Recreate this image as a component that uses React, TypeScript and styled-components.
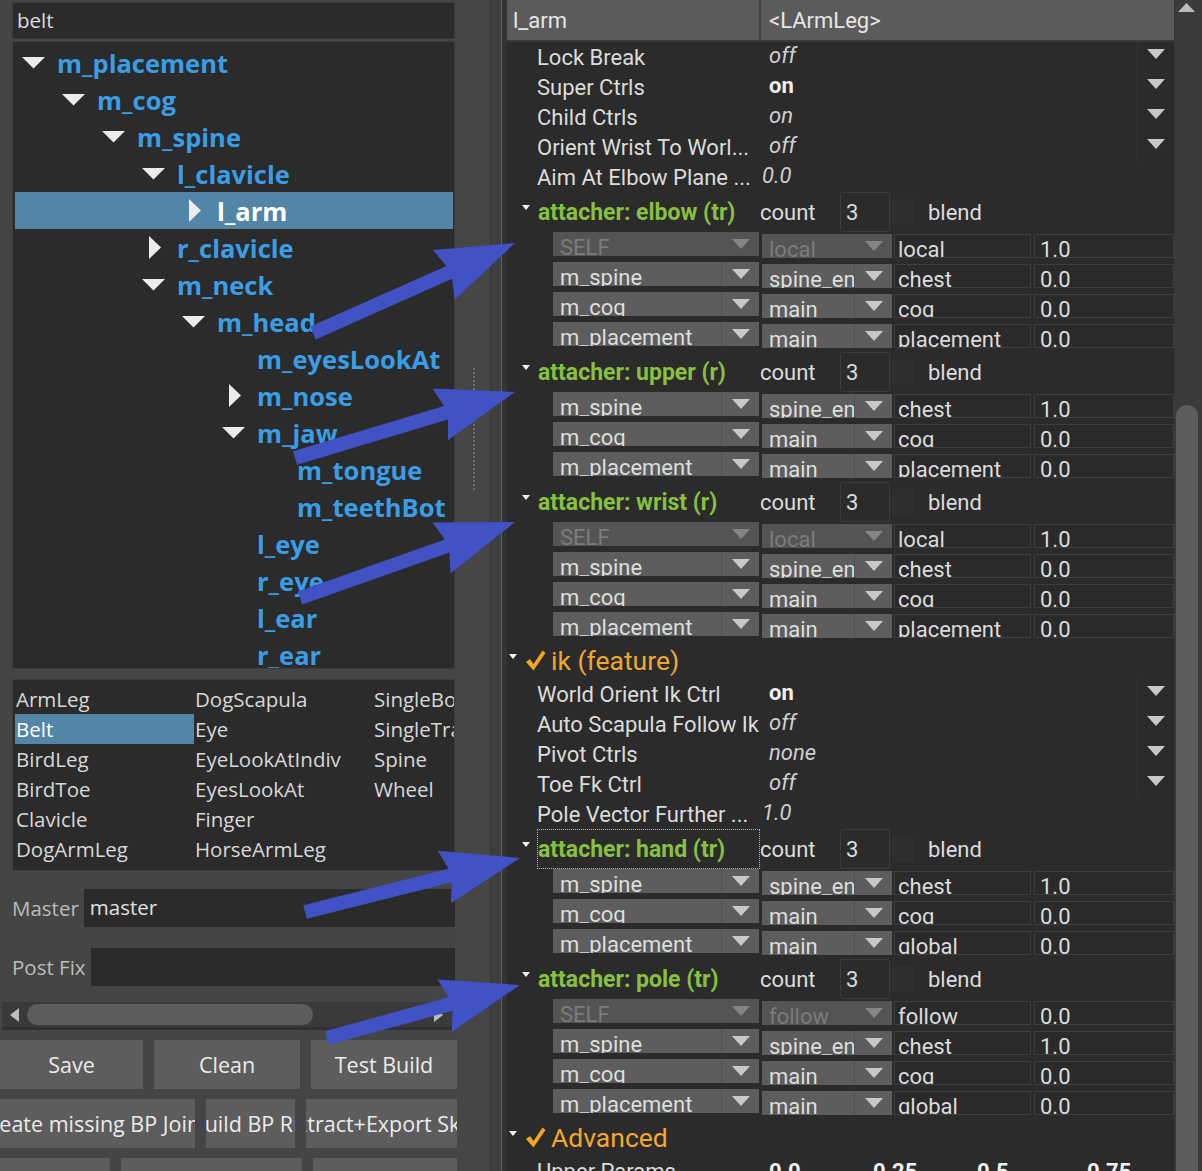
import React from "react";
import styled, { createGlobalStyle } from "styled-components";

const GlobalStyle = createGlobalStyle`
  html, body { margin: 0; padding: 0; background: #444444; }
  body { font-family: "Open Sans", "Noto Sans", sans-serif; color: #dcdcdc; }
  * { box-sizing: border-box; }
`;

const Screen = styled.div`
  position: relative;
  display: flex;
  width: 1202px;
  height: 1171px;
  overflow: hidden;
  background: #454545;
`;

/* ---------- left side ---------- */

const LeftPanel = styled.div`
  width: 457px;
  flex: none;
  display: flex;
  flex-direction: column;
`;

const SearchBox = styled.div`
  margin: 2px 2px 0 12px;
  height: 38px;
  background: #2b2b2b;
  border: 1px solid #3a3a3a;
  padding-left: 4px;
  font-size: 20.5px;
  line-height: 35px;
  color: #dcdcdc;
`;

const TreeBox = styled.div`
  margin: 2px 2px 0 12px;
  height: 628px;
  flex: none;
  background: #2b2b2b;
  border: 1px solid #3c3c3c;
  padding: 2px 1px 0 2px;
  overflow: hidden;
`;

const TreeRow = styled.div<{ $level: number; $selected?: boolean }>`
  display: flex;
  align-items: center;
  height: 37px;
  padding-left: ${(p) => 7 + p.$level * 40}px;
  background: ${(p) => (p.$selected ? "#5285a6" : "transparent")};
  color: ${(p) => (p.$selected ? "#ffffff" : "#3a9ee6")};
  font-weight: 700;
  font-size: 25.5px;
  white-space: nowrap;
`;

const Twisty = styled.span`
  width: 35px;
  flex: none;
  display: flex;
  align-items: center;
`;

const TypeList = styled.div`
  margin: 10px 2px 0 12px;
  height: 192px;
  flex: none;
  background: #2b2b2b;
  border: 1px solid #3c3c3c;
  padding: 4px 0 0 2px;
  overflow: hidden;
  display: grid;
  grid-auto-flow: column;
  grid-template-rows: repeat(6, 30px);
  grid-auto-columns: 179px;
`;

const TypeItem = styled.div<{ $selected?: boolean }>`
  font-size: 20.5px;
  line-height: 30px;
  padding-left: 1px;
  white-space: nowrap;
  overflow: hidden;
  background: ${(p) => (p.$selected ? "#5285a6" : "transparent")};
  color: ${(p) => (p.$selected ? "#ffffff" : "#d8d8d8")};
`;

const FieldRow = styled.div<{ $top: number }>`
  display: flex;
  align-items: center;
  margin: ${(p) => p.$top}px 2px 0 12px;
  height: 38px;
  flex: none;
`;

const FieldLabel = styled.span`
  font-size: 20.5px;
  color: #bcbcbc;
  margin-right: 5px;
`;

const FieldInput = styled.div`
  flex: 1;
  height: 100%;
  background: #2b2b2b;
  font-size: 20.5px;
  line-height: 37px;
  padding-left: 6px;
  color: #e0e0e0;
`;

const HScroll = styled.div`
  margin: 16px 4px 0 2px;
  height: 28px;
  flex: none;
  background: #3a3a3a;
  border-bottom: 3px solid #303030;
  display: flex;
  align-items: center;
  padding-left: 8px;
`;

const HThumb = styled.div`
  margin-left: 8px;
  width: 286px;
  height: 21px;
  border-radius: 11px;
  background: #5d5d5d;
`;

const HRightArrow = styled.div`
  margin-left: auto;
  margin-right: 10px;
  display: flex;
`;

const ButtonRow = styled.div<{ $cols: string }>`
  display: grid;
  grid-template-columns: ${(p) => p.$cols};
  column-gap: 11px;
  height: 49px;
  flex: none;
  margin-top: 10px;
`;

const ToolButton = styled.div`
  background: #5d5d5d;
  display: flex;
  align-items: center;
  justify-content: center;
  overflow: hidden;
  white-space: nowrap;
  font-size: 21.5px;
  color: #ececec;
`;

/* ---------- splitter ---------- */

const Splitter = styled.div`
  width: 45px;
  flex: none;
  display: flex;
`;

const Grip = styled.div`
  width: 33px;
  background: #464646;
  display: flex;
  justify-content: center;
`;

const GripDots = styled.div`
  margin-top: 368px;
  height: 122px;
  border-left: 2px dotted #6c6c6c;
`;

const Gutter = styled.div`
  width: 12px;
  background: #3e3e3e;
  border-left: 1px solid #373737;
  border-right: 1px solid #56636d;
`;

/* ---------- right side ---------- */

const RightPanel = styled.div`
  flex: 1;
  display: flex;
  background: #333333;
  padding-left: 5px;
  font-family: Roboto, "Noto Sans", sans-serif;
  font-size: 22px;
  color: #dcdcdc;
`;

const Inspector = styled.div`
  width: 667px;
  flex: none;
  display: flex;
  flex-direction: column;
  background: #2b2b2b;
  overflow: hidden;
`;

const HeaderBar = styled.div`
  display: flex;
  height: 42px;
  flex: none;
  background: #5b5b5b;
  border-bottom: 2px solid #3a3a3a;
`;

const HeaderCell = styled.div<{ $w?: number }>`
  ${(p) => (p.$w ? `width: ${p.$w}px;` : "flex: 1;")}
  display: flex;
  align-items: center;
  padding-left: ${(p) => (p.$w ? 6 : 8)}px;
  ${(p) => (p.$w ? "border-right: 2px solid #454545;" : "")}
  color: #e6e6e6;
`;

const PropRow = styled.div`
  display: flex;
  align-items: center;
  height: 30px;
  flex: none;
`;

const PropLabel = styled.div`
  width: 262px;
  flex: none;
  padding-left: 30px;
  white-space: nowrap;
  color: #dcdcdc;
`;

const PropValue = styled.div<{ $bold?: boolean; $float?: boolean }>`
  flex: 1;
  margin-left: ${(p) => (p.$float ? -7 : 0)}px;
  margin-top: -4px;
  font-style: ${(p) => (p.$bold ? "normal" : "italic")};
  font-weight: ${(p) => (p.$bold ? 700 : 400)};
  color: ${(p) => (p.$bold ? "#f0f0f0" : "#cfcfcf")};
`;

const PropArrow = styled.div`
  width: 37px;
  height: 100%;
  flex: none;
  border-left: 1px solid #353535;
  display: flex;
  align-items: center;
  justify-content: center;
  padding-bottom: 6px;
`;

const AttachHead = styled.div`
  display: flex;
  align-items: center;
  height: 40px;
  flex: none;
  padding-left: 15px;
`;

const SmallTwisty = styled.span`
  width: 15px;
  flex: none;
  display: flex;
  margin-top: -10px;
`;

const AttachTitle = styled.div<{ $focused?: boolean }>`
  width: 223px;
  height: 40px;
  flex: none;
  display: flex;
  align-items: center;
  color: #88c040;
  font-weight: 700;
  font-size: 23px;
  white-space: nowrap;
  border: 1px dotted ${(p) => (p.$focused ? "#b8b8b8" : "transparent")};
`;

const CountLabel = styled.div`
  width: 80px;
  flex: none;
`;

const CountBox = styled.div`
  width: 50px;
  height: 40px;
  flex: none;
  border: 1px solid #3c3c3c;
  border-radius: 2px;
  display: flex;
  align-items: center;
  padding-left: 5px;
`;

const BlendCheck = styled.div`
  width: 22px;
  height: 26px;
  margin-left: 2px;
  background: #2f2f2f;
`;

const BlendLabel = styled.div`
  margin-left: 14px;
`;

const LinkRow = styled.div`
  display: flex;
  align-items: flex-start;
  height: 30px;
  flex: none;
  padding-left: 46px;
`;

const Combo = styled.div<{ $w: number; $gap: number; $drop?: number; $disabled?: boolean }>`
  display: flex;
  width: ${(p) => p.$w}px;
  height: 24px;
  flex: none;
  margin-right: ${(p) => p.$gap}px;
  margin-top: ${(p) => p.$drop ?? 0}px;
  background: ${(p) => (p.$disabled ? "#545454" : "#5d5d5d")};
  color: ${(p) => (p.$disabled ? "#7b7b7b" : "#dedede")};
`;

const ComboText = styled.div`
  flex: 1;
  overflow: hidden;
  white-space: nowrap;
  padding: 4px 0 0 7px;
  line-height: 24px;
`;

const ComboArrow = styled.div`
  width: 38px;
  flex: none;
  border-left: 1px solid #505050;
  display: flex;
  justify-content: center;
  padding-top: 7px;
`;

const Field = styled.div<{ $w?: number; $gap?: number }>`
  ${(p) => (p.$w ? `width: ${p.$w}px;` : "flex: 1;")}
  margin-right: ${(p) => p.$gap ?? 0}px;
  margin-top: 2px;
  height: 24px;
  flex-shrink: 0;
  border: 1px solid #3e3e3e;
  background: #2a2a2a;
  overflow: hidden;
  white-space: nowrap;
  padding: 3px 0 0 ${(p) => (p.$w ? 3 : 5)}px;
  line-height: 24px;
  color: #dcdcdc;
`;

const FeatureHead = styled.div`
  display: flex;
  align-items: center;
  height: 37px;
  flex: none;
  padding-left: 2px;
  color: #f0a830;
  font-size: 26.5px;
`;

const FeatureTwisty = styled.span`
  display: flex;
  margin: -8px 8px 0 0;
`;

const CheckMark = styled.span`
  display: flex;
  margin-right: 5px;
`;

const ParamRow = styled.div`
  display: flex;
  align-items: center;
  height: 30px;
  flex: none;
`;

const ParamValue = styled.div<{ $w: number }>`
  width: ${(p) => p.$w}px;
  flex: none;
  font-weight: 700;
  color: #f0f0f0;
`;

const VScroll = styled.div`
  width: 27px;
  flex: none;
  margin-left: 1px;
  background: #3b3b3b;
  display: flex;
  flex-direction: column;
  align-items: flex-start;
`;

const ScrollUp = styled.div`
  margin: 3px 0 0 3px;
  display: flex;
`;

const VThumb = styled.div`
  margin: 393px 0 0 1px;
  width: 22px;
  flex: 1;
  background: #5d5d5d;
  border-radius: 11px 11px 0 0;
`;

const Overlay = styled.svg`
  position: absolute;
  left: 0;
  top: 0;
  pointer-events: none;
`;

/* ---------- data ---------- */

type Tw = "down" | "right" | "none";

const tree: { name: string; level: number; tw: Tw; selected?: boolean }[] = [
  { name: "m_placement", level: 0, tw: "down" },
  { name: "m_cog", level: 1, tw: "down" },
  { name: "m_spine", level: 2, tw: "down" },
  { name: "l_clavicle", level: 3, tw: "down" },
  { name: "l_arm", level: 4, tw: "right", selected: true },
  { name: "r_clavicle", level: 3, tw: "right" },
  { name: "m_neck", level: 3, tw: "down" },
  { name: "m_head", level: 4, tw: "down" },
  { name: "m_eyesLookAt", level: 5, tw: "none" },
  { name: "m_nose", level: 5, tw: "right" },
  { name: "m_jaw", level: 5, tw: "down" },
  { name: "m_tongue", level: 6, tw: "none" },
  { name: "m_teethBot", level: 6, tw: "none" },
  { name: "l_eye", level: 5, tw: "none" },
  { name: "r_eye", level: 5, tw: "none" },
  { name: "l_ear", level: 5, tw: "none" },
  { name: "r_ear", level: 5, tw: "none" },
];

const types = [
  "ArmLeg", "Belt", "BirdLeg", "BirdToe", "Clavicle", "DogArmLeg",
  "DogScapula", "Eye", "EyeLookAtIndiv", "EyesLookAt", "Finger", "HorseArmLeg",
  "SingleBone", "SingleTransform", "Spine", "Wheel",
];

type Prop = { label: string; value: string; bold?: boolean; float?: boolean };

const armProps: Prop[] = [
  { label: "Lock Break", value: "off" },
  { label: "Super Ctrls", value: "on", bold: true },
  { label: "Child Ctrls", value: "on" },
  { label: "Orient Wrist To Worl...", value: "off" },
  { label: "Aim At Elbow Plane ...", value: "0.0", float: true },
];

const ikProps: Prop[] = [
  { label: "World Orient Ik Ctrl", value: "on", bold: true },
  { label: "Auto Scapula Follow Ik", value: "off" },
  { label: "Pivot Ctrls", value: "none" },
  { label: "Toe Fk Ctrl", value: "off" },
  { label: "Pole Vector Further ...", value: "1.0", float: true },
];

type Link = [string, string, string, string, boolean?];

const attachers: Record<string, Link[]> = {
  elbow: [
    ["SELF", "local", "local", "1.0", true],
    ["m_spine", "spine_end", "chest", "0.0"],
    ["m_cog", "main", "cog", "0.0"],
    ["m_placement", "main", "placement", "0.0"],
  ],
  upper: [
    ["m_spine", "spine_end", "chest", "1.0"],
    ["m_cog", "main", "cog", "0.0"],
    ["m_placement", "main", "placement", "0.0"],
  ],
  wrist: [
    ["SELF", "local", "local", "1.0", true],
    ["m_spine", "spine_end", "chest", "0.0"],
    ["m_cog", "main", "cog", "0.0"],
    ["m_placement", "main", "placement", "0.0"],
  ],
  hand: [
    ["m_spine", "spine_end", "chest", "1.0"],
    ["m_cog", "main", "cog", "0.0"],
    ["m_placement", "main", "global", "0.0"],
  ],
  pole: [
    ["SELF", "follow", "follow", "0.0", true],
    ["m_spine", "spine_end", "chest", "1.0"],
    ["m_cog", "main", "cog", "0.0"],
    ["m_placement", "main", "global", "0.0"],
  ],
};

// annotation arrows: tail -> tip
const arrows = [
  [313, 333, 515, 243],
  [295, 458, 515, 392],
  [300, 598, 515, 522],
  [305, 912, 520, 858],
  [327, 1038, 520, 985],
];

const arrowPoints = (tx: number, ty: number, hx: number, hy: number) => {
  const dx = hx - tx;
  const dy = hy - ty;
  const len = Math.hypot(dx, dy);
  const ux = dx / len;
  const uy = dy / len;
  const nx = -uy;
  const ny = ux;
  const head = 72;
  const hw = 27;
  const sw = 7;
  const bx = hx - ux * head;
  const by = hy - uy * head;
  return [
    [tx + nx * sw, ty + ny * sw],
    [bx + nx * sw, by + ny * sw],
    [bx + nx * hw - ux * 6, by + ny * hw - uy * 6],
    [hx, hy],
    [bx - nx * hw - ux * 6, by - ny * hw - uy * 6],
    [bx - nx * sw, by - ny * sw],
    [tx - nx * sw, ty - ny * sw],
  ]
    .map(([x, y]) => `${x.toFixed(1)},${y.toFixed(1)}`)
    .join(" ");
};

/* ---------- pieces ---------- */

const Tri = ({ dir, color = "#ececec" }: { dir: "down" | "right"; color?: string }) =>
  dir === "down" ? (
    <svg width="23" height="12" viewBox="0 0 23 12">
      <polygon points="0,0 23,0 11.5,11.5" fill={color} />
    </svg>
  ) : (
    <svg width="19" height="23" viewBox="0 0 19 23">
      <polygon points="7,0 19,11.5 7,23" fill={color} />
    </svg>
  );

const DropTri = ({ color = "#c8c8c8" }: { color?: string }) => (
  <svg width="18" height="10" viewBox="0 0 18 10">
    <polygon points="0,0 18,0 9,10" fill={color} />
  </svg>
);

const MiniTri = () => (
  <svg width="8" height="5" viewBox="0 0 8 5">
    <polygon points="0,0 8,0 4,5" fill="#f0f0f0" />
  </svg>
);

const Check = () => (
  <svg width="21" height="21" viewBox="0 0 21 21">
    <polygon points="1,12 5,9 8.5,14 17.5,0.5 20.5,3 8.5,20.5" fill="#f2a51f" />
  </svg>
);

const PropList = ({ items }: { items: Prop[] }) => (
  <>
    {items.map((p) => (
      <PropRow key={p.label}>
        <PropLabel>{p.label}</PropLabel>
        <PropValue $bold={p.bold} $float={p.float}>
          {p.value}
        </PropValue>
        {!p.float && (
          <PropArrow>
            <DropTri />
          </PropArrow>
        )}
      </PropRow>
    ))}
  </>
);

const Attacher = ({ title, rows, focused }: { title: string; rows: Link[]; focused?: boolean }) => (
  <>
    <AttachHead>
      <SmallTwisty>
        <MiniTri />
      </SmallTwisty>
      <AttachTitle $focused={focused}>{title}</AttachTitle>
      <CountLabel>count</CountLabel>
      <CountBox>3</CountBox>
      <BlendCheck />
      <BlendLabel>blend</BlendLabel>
    </AttachHead>
    {rows.map(([a, b, c, d, off], i) => (
      <LinkRow key={i}>
        <Combo $w={206} $gap={3} $disabled={off}>
          <ComboText>{a}</ComboText>
          <ComboArrow>
            <DropTri color={off ? "#858585" : "#c8c8c8"} />
          </ComboArrow>
        </Combo>
        <Combo $w={130} $gap={2} $drop={2} $disabled={off}>
          <ComboText>{b}</ComboText>
          <ComboArrow>
            <DropTri color={off ? "#858585" : "#c8c8c8"} />
          </ComboArrow>
        </Combo>
        <Field $w={137} $gap={3}>
          {c}
        </Field>
        <Field>{d}</Field>
      </LinkRow>
    ))}
  </>
);

const Feature = ({ title }: { title: string }) => (
  <FeatureHead>
    <FeatureTwisty>
      <MiniTri />
    </FeatureTwisty>
    <CheckMark>
      <Check />
    </CheckMark>
    {title}
  </FeatureHead>
);

export default function App() {
  return (
    <>
      <GlobalStyle />
      <Screen>
        <LeftPanel>
          <SearchBox>belt</SearchBox>
          <TreeBox>
            {tree.map((n) => (
              <TreeRow key={n.name} $level={n.level} $selected={n.selected}>
                <Twisty>{n.tw !== "none" && <Tri dir={n.tw} />}</Twisty>
                {n.name}
              </TreeRow>
            ))}
          </TreeBox>
          <TypeList>
            {types.map((t) => (
              <TypeItem key={t} $selected={t === "Belt"}>
                {t}
              </TypeItem>
            ))}
          </TypeList>
          <FieldRow $top={18}>
            <FieldLabel>Master</FieldLabel>
            <FieldInput>master</FieldInput>
          </FieldRow>
          <FieldRow $top={21}>
            <FieldLabel>Post Fix</FieldLabel>
            <FieldInput />
          </FieldRow>
          <HScroll>
            <svg width="9" height="14" viewBox="0 0 9 14">
              <polygon points="9,0 0,7 9,14" fill="#bdbdbd" />
            </svg>
            <HThumb />
            <HRightArrow>
              <svg width="9" height="14" viewBox="0 0 9 14">
                <polygon points="0,0 9,7 0,14" fill="#bdbdbd" />
              </svg>
            </HRightArrow>
          </HScroll>
          <ButtonRow $cols="143px 146px 146px">
            <ToolButton>Save</ToolButton>
            <ToolButton>Clean</ToolButton>
            <ToolButton>Test Build</ToolButton>
          </ButtonRow>
          <ButtonRow $cols="195px 89px 151px">
            <ToolButton>Create missing BP Joints</ToolButton>
            <ToolButton>Build BP Rig</ToolButton>
            <ToolButton>Extract+Export Skin</ToolButton>
          </ButtonRow>
          <ButtonRow $cols="110px 181px 144px">
            <ToolButton />
            <ToolButton />
            <ToolButton />
          </ButtonRow>
        </LeftPanel>

        <Splitter>
          <Grip>
            <GripDots />
          </Grip>
          <Gutter />
        </Splitter>

        <RightPanel>
          <Inspector>
            <HeaderBar>
              <HeaderCell $w={254}>l_arm</HeaderCell>
              <HeaderCell>&lt;LArmLeg&gt;</HeaderCell>
            </HeaderBar>
            <PropList items={armProps} />
            <Attacher title="attacher: elbow (tr)" rows={attachers.elbow} />
            <Attacher title="attacher: upper (r)" rows={attachers.upper} />
            <Attacher title="attacher: wrist (r)" rows={attachers.wrist} />
            <Feature title="ik (feature)" />
            <PropList items={ikProps} />
            <Attacher title="attacher: hand (tr)" rows={attachers.hand} focused />
            <Attacher title="attacher: pole (tr)" rows={attachers.pole} />
            <Feature title="Advanced" />
            <ParamRow>
              <PropLabel>Upper Params</PropLabel>
              <ParamValue $w={104}>0.0</ParamValue>
              <ParamValue $w={104}>0.25</ParamValue>
              <ParamValue $w={110}>0.5</ParamValue>
              <ParamValue $w={80}>0.75</ParamValue>
            </ParamRow>
          </Inspector>
          <VScroll>
            <ScrollUp>
              <svg width="17" height="9" viewBox="0 0 17 9">
                <polygon points="0,9 17,9 8.5,0" fill="#bcbcbc" />
              </svg>
            </ScrollUp>
            <VThumb />
          </VScroll>
        </RightPanel>

        <Overlay width="1202" height="1171" viewBox="0 0 1202 1171">
          {arrows.map(([a, b, c, d], i) => (
            <polygon key={i} points={arrowPoints(a, b, c, d)} fill="#4052c4" />
          ))}
        </Overlay>
      </Screen>
    </>
  );
}
